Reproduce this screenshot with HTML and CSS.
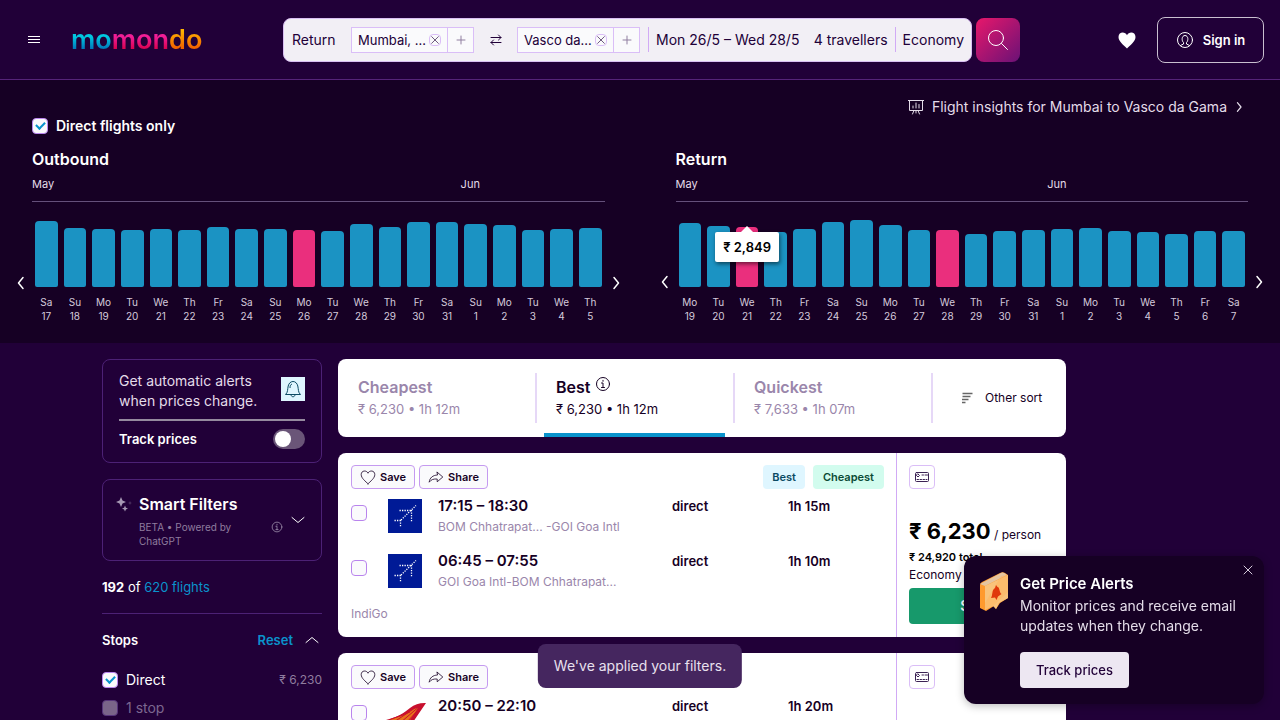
FILE: index.html
```html
<!DOCTYPE html>
<html lang="en">
<head>
<meta charset="utf-8">
<title>momondo – Mumbai to Vasco da Gama</title>
<link rel="stylesheet" href="styles.css">
</head>
<body>
<svg class="defs" aria-hidden="true">
  <symbol id="heart" viewBox="0 0 20 20"><path d="M10 18.500C7 15.500 1.500 11.500 1.500 7C1.500 1.500 8.300 1.200 10 5.300C11.700 1.200 18.500 1.500 18.500 7C18.500 11.500 13 15.500 10 18.500Z"/></symbol>
  <symbol id="share" viewBox="0 0 20 20"><path d="M11.500 4L18.500 10L11.500 16V12.500C7 12.300 4 13 1.500 16.500C2 11 6 7.800 11.500 7.500Z"/></symbol>
  <symbol id="x" viewBox="0 0 12 12"><path d="M2 2L10 10M10 2L2 10"/></symbol>
  <symbol id="plus" viewBox="0 0 12 12"><path d="M6 2V10M2 6H10"/></symbol>
  <symbol id="info" viewBox="0 0 16 16"><circle cx="8" cy="8" r="6.500"/><path d="M8 4.300V5.300M6.500 7H8V11.500M6.500 11.500H9.500"/></symbol>
  <symbol id="left" viewBox="0 0 10 16"><path d="M7 2.500L2.500 8L7 13.500"/></symbol>
  <symbol id="right" viewBox="0 0 10 16"><path d="M3 2.500L7.500 8L3 13.500"/></symbol>
  <symbol id="card" viewBox="0 0 16 12"><rect x="1.500" y="1.500" width="13" height="9" rx="1"/><path d="M4 3L5.500 4.500L4 6L2.500 4.500ZM8 4H9.500M11 4H13.500" /><path d="M3 8.500H13" stroke-dasharray="1.500 1.500"/></symbol>
  <symbol id="indigo" viewBox="0 0 34 34"><rect width="34" height="34" fill="#001a96" stroke="none"/><path d="M11.500 11.500H24M23.500 11V23M12.500 21V28M6.500 21.500H14M13 21L28 6.500" fill="none" stroke="#fff" stroke-width="1.300" stroke-dasharray="1.300 1.200"/></symbol>
</svg>
<div class="page">
  <header class="header">
    <button class="icon-btn menu" aria-label="Menu"><svg class="line" width="12" height="10" viewBox="0 0 12 10"><path d="M0 1.500H12M0 4.500H12M0 7.500H12"/></svg></button>
    <a class="logo" href="#"><span class="logo-a">mo</span><span class="logo-b">mon</span><span class="logo-c">do</span></a>
    <form class="search">
      <div class="fields">
        <button type="button" class="field trip">Return</button>
        <div class="chip"><span>Mumbai, ...</span><button type="button" class="clear" aria-label="Remove Mumbai"><svg class="line" width="10" height="10"><use href="#x"/></svg></button></div>
        <button type="button" class="add" aria-label="Add origin"><svg class="line" width="12" height="12"><use href="#plus"/></svg></button>
        <button type="button" class="swap" aria-label="Swap"><svg class="line" width="12" height="12" viewBox="0 0 12 12"><path d="M1 3.500H11M8.500 1L11 3.500L8.500 6M11 8.500H1M3.500 6L1 8.500L3.500 11"/></svg></button>
        <div class="chip"><span>Vasco da...</span><button type="button" class="clear" aria-label="Remove Vasco da Gama"><svg class="line" width="10" height="10"><use href="#x"/></svg></button></div>
        <button type="button" class="add" aria-label="Add destination"><svg class="line" width="12" height="12"><use href="#plus"/></svg></button>
        <button type="button" class="field dates">Mon 26/5 – Wed 28/5</button>
        <button type="button" class="field travellers">4 travellers</button>
        <button type="button" class="field cabin">Economy</button>
      </div>
      <button type="button" class="go" aria-label="Search"><svg class="line" width="22" height="22" viewBox="0 0 22 22"><circle cx="9" cy="9" r="7.500"/><path d="M14.500 14.500L20.500 20.500"/></svg></button>
    </form>
    <div class="account">
      <button class="icon-btn fav" aria-label="Favourites"><svg width="20" height="20" fill="#fff"><use href="#heart"/></svg></button>
      <button class="signin"><svg class="line" width="18" height="18" viewBox="0 0 18 18"><circle cx="9" cy="9" r="7.500"/><path d="M4.500 14.500L7.500 13V11.500C5.500 10 5.500 4.500 9 4.500S12.500 10 10.500 11.500V13L13.500 14.500"/></svg>Sign in</button>
    </div>
  </header>

  <section class="calendar">
    <a class="insights" href="#"><svg class="line" width="16" height="16" viewBox="0 0 16 16"><path d="M0 1.500H16M1.500 1.500V11.500H14.500V1.500M5 9V7M8 9V4M11 9V5.500M6 11.500L4.500 15M10 11.500L11.500 15M8 11.500V14"/></svg>Flight insights for Mumbai to Vasco da Gama<svg class="line bold-line" width="8" height="14"><use href="#right"/></svg></a>
    <label class="check direct-only"><input type="checkbox" checked>Direct flights only</label>
    <div class="charts">
      <div class="chart">
        <h2>Outbound</h2>
        <div class="months"><span>May</span><span class="jun-out">Jun</span></div>
        <button class="arrow" aria-label="Earlier outbound dates"><svg class="line bold-line" width="10" height="16"><use href="#left"/></svg></button>
        <ol class="days">
          <li><button class="bar" style="height:66px" aria-label="17 May"></button>Sa<br>17</li>
          <li><button class="bar" style="height:59px" aria-label="18 May"></button>Su<br>18</li>
          <li><button class="bar" style="height:58px" aria-label="19 May"></button>Mo<br>19</li>
          <li><button class="bar" style="height:57px" aria-label="20 May"></button>Tu<br>20</li>
          <li><button class="bar" style="height:58px" aria-label="21 May"></button>We<br>21</li>
          <li><button class="bar" style="height:57px" aria-label="22 May"></button>Th<br>22</li>
          <li><button class="bar" style="height:60px" aria-label="23 May"></button>Fr<br>23</li>
          <li><button class="bar" style="height:58px" aria-label="24 May"></button>Sa<br>24</li>
          <li><button class="bar" style="height:58px" aria-label="25 May"></button>Su<br>25</li>
          <li><button class="bar picked" style="height:57px" aria-label="26 May"></button>Mo<br>26</li>
          <li><button class="bar" style="height:56px" aria-label="27 May"></button>Tu<br>27</li>
          <li><button class="bar" style="height:63px" aria-label="28 May"></button>We<br>28</li>
          <li><button class="bar" style="height:60px" aria-label="29 May"></button>Th<br>29</li>
          <li><button class="bar" style="height:65px" aria-label="30 May"></button>Fr<br>30</li>
          <li><button class="bar" style="height:65px" aria-label="31 May"></button>Sa<br>31</li>
          <li><button class="bar" style="height:63px" aria-label="1 June"></button>Su<br>1</li>
          <li><button class="bar" style="height:62px" aria-label="2 June"></button>Mo<br>2</li>
          <li><button class="bar" style="height:57px" aria-label="3 June"></button>Tu<br>3</li>
          <li><button class="bar" style="height:58px" aria-label="4 June"></button>We<br>4</li>
          <li><button class="bar" style="height:59px" aria-label="5 June"></button>Th<br>5</li>
        </ol>
        <button class="arrow next" aria-label="Later outbound dates"><svg class="line bold-line" width="10" height="16"><use href="#right"/></svg></button>
      </div>
      <div class="chart">
        <h2>Return</h2>
        <div class="months"><span>May</span><span class="jun-ret">Jun</span></div>
        <button class="arrow" aria-label="Earlier return dates"><svg class="line bold-line" width="10" height="16"><use href="#left"/></svg></button>
        <ol class="days">
          <li><button class="bar" style="height:64px" aria-label="19 May"></button>Mo<br>19</li>
          <li><button class="bar" style="height:61px" aria-label="20 May"></button>Tu<br>20</li>
          <li><button class="bar picked" style="height:60px" aria-label="21 May"></button>We<br>21<span class="tip">₹ 2,849</span></li>
          <li><button class="bar" style="height:55px" aria-label="22 May"></button>Th<br>22</li>
          <li><button class="bar" style="height:58px" aria-label="23 May"></button>Fr<br>23</li>
          <li><button class="bar" style="height:65px" aria-label="24 May"></button>Sa<br>24</li>
          <li><button class="bar" style="height:67px" aria-label="25 May"></button>Su<br>25</li>
          <li><button class="bar" style="height:62px" aria-label="26 May"></button>Mo<br>26</li>
          <li><button class="bar" style="height:57px" aria-label="27 May"></button>Tu<br>27</li>
          <li><button class="bar picked" style="height:57px" aria-label="28 May"></button>We<br>28</li>
          <li><button class="bar" style="height:53px" aria-label="29 May"></button>Th<br>29</li>
          <li><button class="bar" style="height:56px" aria-label="30 May"></button>Fr<br>30</li>
          <li><button class="bar" style="height:57px" aria-label="31 May"></button>Sa<br>31</li>
          <li><button class="bar" style="height:58px" aria-label="1 June"></button>Su<br>1</li>
          <li><button class="bar" style="height:59px" aria-label="2 June"></button>Mo<br>2</li>
          <li><button class="bar" style="height:56px" aria-label="3 June"></button>Tu<br>3</li>
          <li><button class="bar" style="height:55px" aria-label="4 June"></button>We<br>4</li>
          <li><button class="bar" style="height:53px" aria-label="5 June"></button>Th<br>5</li>
          <li><button class="bar" style="height:56px" aria-label="6 June"></button>Fr<br>6</li>
          <li><button class="bar" style="height:56px" aria-label="7 June"></button>Sa<br>7</li>
        </ol>
        <button class="arrow next" aria-label="Later return dates"><svg class="line bold-line" width="10" height="16"><use href="#right"/></svg></button>
      </div>
    </div>
  </section>

  <div class="content">
    <aside class="sidebar">
      <section class="panel alerts">
        <div class="alerts-top">
          <p>Get automatic alerts<br>when prices change.</p>
          <span class="bell"><svg width="18" height="18" viewBox="0 0 18 18" fill="none" stroke="#0b4a63"><path d="M1.500 14.500C4 12.500 3.500 9 4.200 6C4.800 3.500 6.500 1.500 9 1.500S13.200 3.500 13.800 6C14.500 9 14 12.500 16.500 14.500ZM7 14.500C7 17.500 11 17.500 11 14.500M6 8C6 5.500 6.700 4.500 8 4"/></svg></span>
        </div>
        <label class="track">Track prices<input type="checkbox" class="switch"></label>
      </section>
      <section class="panel smart">
        <svg class="sparkle" width="16" height="16" viewBox="0 0 16 16" fill="#a698b3"><path d="M5 1L6.500 4.500L10 6L6.500 7.500L5 11L3.500 7.500L0 6L3.500 4.500Z"/><path d="M9 9.500L9.900 11.700L12 12.500L9.900 13.400L9 15.500L8.100 13.400L6 12.500L8.100 11.700Z"/><path d="M14 5L14.700 6.500L16 7L14.700 7.600L14 9L13.300 7.600L12 7L13.300 6.500Z" fill="#4c3260"/></svg>
        <div class="smart-text"><h3>Smart Filters</h3><p>BETA • Powered by<br>ChatGPT</p></div>
        <svg class="line smart-info" width="12" height="12"><use href="#info"/></svg>
        <button class="icon-btn" aria-label="Expand smart filters"><svg class="line" width="14" height="8" viewBox="0 0 14 8"><path d="M1 1.500L7 6.500L13 1.500"/></svg></button>
      </section>
      <p class="count"><b>192</b> of <a href="#">620 flights</a></p>
      <section class="stops">
        <div class="stops-head"><h3>Stops</h3><button class="reset">Reset</button><button class="icon-btn" aria-label="Collapse stops"><svg class="line" width="14" height="8" viewBox="0 0 14 8"><path d="M1 6.500L7 1.500L13 6.500"/></svg></button></div>
        <div class="stop-row"><label class="check"><input type="checkbox" checked>Direct</label><span>₹ 6,230</span></div>
        <div class="stop-row off"><label class="check"><input type="checkbox" disabled>1 stop</label></div>
      </section>
    </aside>

    <main class="results">
      <div class="sort">
        <button class="tab"><b>Cheapest</b><span>₹ 6,230 • 1h 12m</span></button>
        <button class="tab active"><b>Best <svg class="line" width="16" height="16"><use href="#info"/></svg></b><span>₹ 6,230 • 1h 12m</span></button>
        <button class="tab"><b>Quickest</b><span>₹ 7,633 • 1h 07m</span></button>
        <button class="other"><svg width="12" height="12" viewBox="0 0 12 12" fill="none" stroke="#666" stroke-width="1.500"><path d="M1.500 1.500H11.500M1.500 4.500H9.500M1 7.500H7.500M1 10.500H4.500"/></svg>Other sort</button>
      </div>

      <article class="card">
        <div class="trip-info">
          <div class="actions">
            <button class="pill"><svg class="line" width="16" height="16"><use href="#heart"/></svg>Save</button>
            <button class="pill"><svg class="line" width="16" height="16"><use href="#share"/></svg>Share</button>
            <span class="badge best">Best</span><span class="badge cheap">Cheapest</span>
          </div>
          <div class="leg">
            <input type="checkbox" aria-label="Select outbound leg">
            <svg width="34" height="34" role="img" aria-label="IndiGo"><use href="#indigo"/></svg>
            <div><b class="time">17:15 – 18:30</b><span class="airports">BOM Chhatrapat... -GOI Goa Intl</span></div>
            <b class="fact">direct</b><b class="fact">1h 15m</b>
          </div>
          <div class="leg">
            <input type="checkbox" aria-label="Select return leg">
            <svg width="34" height="34" role="img" aria-label="IndiGo"><use href="#indigo"/></svg>
            <div><b class="time">06:45 – 07:55</b><span class="airports">GOI Goa Intl-BOM Chhatrapat...</span></div>
            <b class="fact">direct</b><b class="fact">1h 10m</b>
          </div>
          <p class="airline">IndiGo</p>
        </div>
        <div class="offer">
          <button class="payment" aria-label="Payment methods"><svg class="line" width="16" height="12"><use href="#card"/></svg></button>
          <p class="price"><b>₹ 6,230</b> / person</p>
          <p class="total">₹ 24,920 total</p>
          <p class="class">Economy</p>
          <button class="select">Select</button>
        </div>
      </article>

      <article class="card">
        <div class="trip-info">
          <div class="actions">
            <button class="pill"><svg class="line" width="16" height="16"><use href="#heart"/></svg>Save</button>
            <button class="pill"><svg class="line" width="16" height="16"><use href="#share"/></svg>Share</button>
          </div>
          <div class="leg">
            <input type="checkbox" aria-label="Select outbound leg">
            <svg class="airindia" width="40" height="34" viewBox="0 0 40 34" role="img" aria-label="Air India"><path d="M0 21C12 18 18 14 24 9Q31 3.500 40 4L25 26H0Z" fill="#c8102e"/><path d="M4 20C16 18 20 15 27 10L32 9L22 24H4Z" fill="#e8731a"/><path d="M14 24L35 6M8 23L29 9M20 24L34 9M3 21L24 13" stroke="#c8102e"/></svg>
            <div><b class="time">20:50 – 22:10</b></div>
            <b class="fact">direct</b><b class="fact">1h 20m</b>
          </div>
        </div>
        <div class="offer">
          <button class="payment" aria-label="Payment methods"><svg class="line" width="16" height="12"><use href="#card"/></svg></button>
        </div>
      </article>
    </main>
  </div>
</div>

<div class="toast" role="status">We've applied your filters.</div>
<aside class="popup">
  <svg width="28" height="40" viewBox="0 0 28 40"><path d="M0 13Q0 11 2 10L20 1Q23 -0.500 25 1L28 3V26L20 31L16 37L14 34L6 39L0 36Z" fill="#ff9a2e"/><path d="M0 12L22 0.500Q24 0 27 3L5 14Z" fill="#e5c5a0"/><path d="M5 14L28 3V26L19 31L16 37L13 34L5 38Z" fill="#f9c37b"/><path d="M21 4L28 3V20L13 34L5 38V31Z" fill="#ffb45a" opacity=".45"/><path d="M11 26C13 23 11.500 18 15 16L16 13L17.500 15C20 15.500 19 20 21.500 22L18 24.500L16.500 28L15 25.500Z" fill="#e0380c"/></svg>
  <div>
    <h3>Get Price Alerts</h3>
    <p>Monitor prices and receive email updates when they change.</p>
    <button class="popup-track">Track prices</button>
  </div>
  <button class="close" aria-label="Close"><svg class="line" width="12" height="12"><use href="#x"/></svg></button>
</aside>
</body>
</html>
```
FILE: styles.css
```css
* { box-sizing: border-box; }
body { margin: 0; background: #210038; color: #fff; font: 14px/20px Inter, "Noto Sans", sans-serif; }
h2, h3, p, ol { margin: 0; padding: 0; }
button { font: inherit; color: inherit; background: none; border: 0; padding: 0; margin: 0; cursor: pointer; }
a { color: inherit; text-decoration: none; }
svg { display: block; flex: none; }
.defs { display: none; }
.line { fill: none; stroke: currentColor; stroke-width: 1; stroke-linecap: round; stroke-linejoin: round; }
.bold-line { stroke-width: 1.5; }
.page { height: 100vh; overflow: hidden; }
.icon-btn { display: flex; align-items: center; justify-content: center; }

input[type="checkbox"] { appearance: none; flex: none; display: grid; place-content: center; width: 16px; height: 16px; margin: 0; border: 1px solid #b984ed; border-radius: 4px; background: #fafafc; }
input[type="checkbox"]:checked::after { content: ""; width: 7px; height: 4px; border: solid #0a93cc; border-width: 0 0 2px 2px; transform: rotate(-45deg) translate(1px, -1px); }
.check { display: flex; align-items: center; gap: 8px; }

.header { display: flex; align-items: center; height: 80px; padding: 0 16px; border-bottom: 1px solid #552379; }
.menu { width: 36px; height: 36px; }
.logo { display: flex; width: 132px; margin-left: 19px; font-size: 27px; line-height: 32px; font-weight: 600; }
.logo span { color: transparent; background-clip: text; -webkit-background-clip: text; }
.logo-a { background-image: linear-gradient(#00c8e0 40%, #0072b8 80%); }
.logo-b { background-image: linear-gradient(#f01e96 40%, #d8004b 80%); }
.logo-c { background-image: linear-gradient(#ffb400 20%, #f05a00 80%); }
.search { display: flex; flex: 0 1 737px; gap: 4px; margin-left: 80px; color: #210038; }
.fields { display: flex; flex: 1; align-items: center; height: 44px; border: 1px solid #d9bff2; border-radius: 8px; background: #f2eff5; white-space: nowrap; }
.field { height: 25px; padding: 0 7px; text-align: left; }
.trip { width: 67px; padding-left: 8px; }
.chip { display: flex; align-items: center; justify-content: space-between; width: 97px; height: 26px; padding: 0 6px; border: 1px solid #dabef7; background: #fafafc; font-size: 13px; }
.clear { padding: 0; border: 1px solid #dabef7; border-radius: 4px; color: #533b66; }
.add { display: grid; place-items: center; width: 26px; height: 26px; border: 1px solid #dabef7; border-left: 0; background: #fafafc; color: #907fa0; }
.swap { display: grid; place-items: center; width: 43px; height: 26px; }
.dates { flex: 1; margin-left: 8px; border-left: 1px solid #d1aaf5; }
.cabin { border-left: 1px solid #d1aaf5; }
.go { display: grid; place-items: center; width: 44px; height: 44px; border-radius: 8px; background: linear-gradient(135deg, #e8176b, #6a1276); color: #fff; }
.account { display: flex; align-items: center; gap: 8px; margin-left: auto; }
.fav { width: 44px; height: 44px; }
.signin { display: flex; align-items: center; justify-content: center; gap: 9px; width: 107px; height: 46px; border: 1px solid #c9bfd0; border-radius: 8px; font-weight: 600; font-size: 13px; }

.calendar { display: flow-root; height: 263px; padding: 17px 16px 0; background: #160024; }
.insights { display: flex; align-items: center; justify-content: flex-end; gap: 8px; padding-right: 21px; color: #e4dce9; }
.direct-only { width: max-content; margin: 0 16px; line-height: 18px; font-weight: 600; }
.charts { display: grid; grid-template-columns: 1fr 1fr; gap: 39px; margin-top: 13px; }
.chart { display: grid; grid-template-columns: 16px minmax(0, 1fr) 16px; }
.chart h2 { grid-column: 2; font-size: 16px; line-height: 22px; font-weight: 600; }
.months { grid-column: 2; display: grid; grid-template-columns: repeat(20, 1fr); height: 32px; padding-top: 4px; border-bottom: 1px solid #64507a; font-size: 11px; line-height: 20px; color: #e4dce9; }
.months span { grid-row: 1; width: 30px; }
.jun-out { grid-column: 16; }
.jun-ret { grid-column: 14; }
.arrow { grid-column: 1; align-self: start; margin-top: 72px; }
.next { grid-column: 3; justify-self: end; }
.days { display: grid; grid-template-columns: repeat(20, 1fr); align-items: end; padding-top: 18px; list-style: none; font-size: 10px; line-height: 14px; text-align: center; color: #d5cbdc; }
.days li { position: relative; padding: 0 3px; }
.bar { display: block; width: 100%; margin-bottom: 8px; border-radius: 4px 4px 2px 2px; background: #1b93c3; }
.picked { background: #ea2f7d; }
.tip { position: absolute; z-index: 1; left: 50%; bottom: 61px; transform: translateX(-50%); width: 64px; border-radius: 2px; background: #fff; color: #000; font-size: 13px; line-height: 30px; font-weight: 600; box-shadow: 1px 2px 4px #0008; }
.tip::before { content: ""; position: absolute; left: 26px; top: -6px; border: 6px solid transparent; border-top: 0; border-bottom-color: #fff; }

.content { display: grid; grid-template-columns: 220px minmax(0, 1fr) 96px; gap: 16px; max-width: 1076px; margin: 16px auto 0; }
.panel { margin-bottom: 16px; border: 1px solid #4c2175; border-radius: 8px; padding: 12px 16px; }
.alerts { height: 104px; padding-top: 11px; color: #e4dce9; }
.alerts-top { display: flex; justify-content: space-between; padding-bottom: 8px; border-bottom: 2px solid #958a9f; }
.bell { display: grid; place-items: center; width: 24px; height: 24px; margin-top: 6px; background: #dff6ff; }
.track { display: flex; justify-content: space-between; align-items: center; padding-top: 8px; font-weight: 600; font-size: 13px; color: #fff; }
.track .switch { place-content: center start; width: 32px; height: 20px; border: 0; border-radius: 10px; padding: 0 2px; background: #6a5578; }
.switch::before { content: ""; width: 16px; height: 16px; border-radius: 50%; background: #fff; }
.smart { display: flex; height: 82px; padding-left: 13px; }
.sparkle { margin: 4px 7px 0 0; }
.smart-text { flex: 1; }
.smart h3 { font-size: 16px; line-height: 24px; font-weight: 600; white-space: nowrap; }
.smart p { margin-top: 4px; font-size: 10px; line-height: 14px; color: #8f7c9e; }
.smart-info { align-self: center; margin: 13px 8px 0 0; color: #a698b3; }
.count { padding-bottom: 16px; border-bottom: 1px solid #4c2175; font-size: 13px; }
.count a { color: #0a93cc; }
.stops-head { display: flex; align-items: center; gap: 12px; margin: 16px 3px 20px 0; }
.stops-head h3 { flex: 1; font-size: 13px; line-height: 20px; font-weight: 600; }
.reset { color: #0a93cc; font-weight: 600; font-size: 13px; }
.stop-row { display: flex; justify-content: space-between; margin-bottom: 8px; }
.stop-row span { font-size: 12px; color: #8f7c9e; }
.stop-row.off { color: #7c6790; }
.stop-row.off input { background: #7a6589; border-color: #56347a; }

.sort { display: grid; grid-template-columns: repeat(3, minmax(0, 1fr)) 134px; height: 78px; margin-bottom: 16px; border-radius: 8px; background: #fff; color: #9a86ab; overflow: hidden; }
.tab { position: relative; display: flex; flex-direction: column; justify-content: center; padding: 0 20px; text-align: left; }
.tab b { display: flex; gap: 5px; font-size: 16px; line-height: 22px; font-weight: 600; }
.tab span { font-size: 13px; line-height: 22px; }
.tab::before { content: ""; position: absolute; right: -1px; top: 14px; width: 2px; height: 50px; background: #e6d8f7; }
.active { color: #160024; }
.active::after { content: ""; position: absolute; left: 8px; right: 9px; bottom: 0; height: 4px; background: #0a93cc; }
.other { display: flex; align-items: center; gap: 12px; padding-left: 29px; font-size: 12px; color: #160024; white-space: nowrap; }

.card { display: grid; grid-template-columns: minmax(0, 1fr) 170px; height: 184px; margin-bottom: 16px; border-radius: 8px; background: #fff; color: #160024; }
.trip-info { padding: 12px 12px 0 13px; }
.actions { display: flex; align-items: center; gap: 4px; height: 24px; margin-bottom: 7px; font-weight: 600; }
.pill { display: flex; align-items: center; gap: 4px; height: 24px; padding: 0 8px; border: 1px solid #c59af0; border-radius: 4px; background: #fafafc; font-size: 11px; }
.badge { padding: 0 9px; border-radius: 4px; font-size: 11px; line-height: 24px; }
.best { margin-left: auto; background: #dff6ff; color: #0b4a63; }
.cheap { margin-left: 4px; padding: 0 10px; background: #d2fcee; color: #0b4a35; }
.leg { display: grid; grid-template-columns: 37px 50px 234px 116px 1fr; align-items: start; height: 55px; }
.leg input { margin-top: 9px; }
.leg > svg { margin-top: 3px; }
.leg > .airindia { margin-left: -2px; }
.time { display: block; font-size: 15px; line-height: 20px; font-weight: 600; }
.airports { display: block; font-size: 12px; line-height: 22px; color: #9a86ab; }
.fact { font-size: 13px; line-height: 20px; font-weight: 600; }
.airline { font-size: 12px; line-height: 16px; color: #9a86ab; }
.offer { padding: 12px 12px 0; border-left: 1px solid #d1aaf5; }
.payment { display: grid; place-items: center; width: 26px; height: 24px; border: 1px solid #dabef7; border-radius: 4px; color: #3c2354; }
.price { margin-top: 29px; font-size: 12px; line-height: 26px; white-space: nowrap; color: #160024; }
.price b { font-size: 22px; font-weight: 700; color: #000; }
.total { font-size: 11px; line-height: 18px; font-weight: 600; color: #000; }
.class { font-size: 12px; line-height: 18px; }
.select { width: 100%; height: 36px; margin-top: 4px; border-radius: 4px; background: #17996b; color: #fff; font-weight: 600; }

.toast { position: fixed; left: 50%; bottom: 32px; transform: translateX(-50%); padding: 12px 16px; border-radius: 8px; background: #45265f; color: #e8e0ee; white-space: nowrap; }
.popup { position: fixed; right: 16px; bottom: 16px; display: flex; gap: 12px; width: 300px; padding: 16px; border-radius: 12px; background: #160024; box-shadow: 0 2px 8px #0004; }
.popup h3 { font-size: 15px; line-height: 24px; font-weight: 600; }
.popup p { color: #e4dce9; }
.popup-track { height: 36px; margin-top: 16px; padding: 0 16px; border-radius: 4px; background: #ede7f2; color: #210038; font-size: 13px; font-weight: 500; }
.close { position: absolute; top: 8px; right: 10px; color: #d5cbdc; }
```
